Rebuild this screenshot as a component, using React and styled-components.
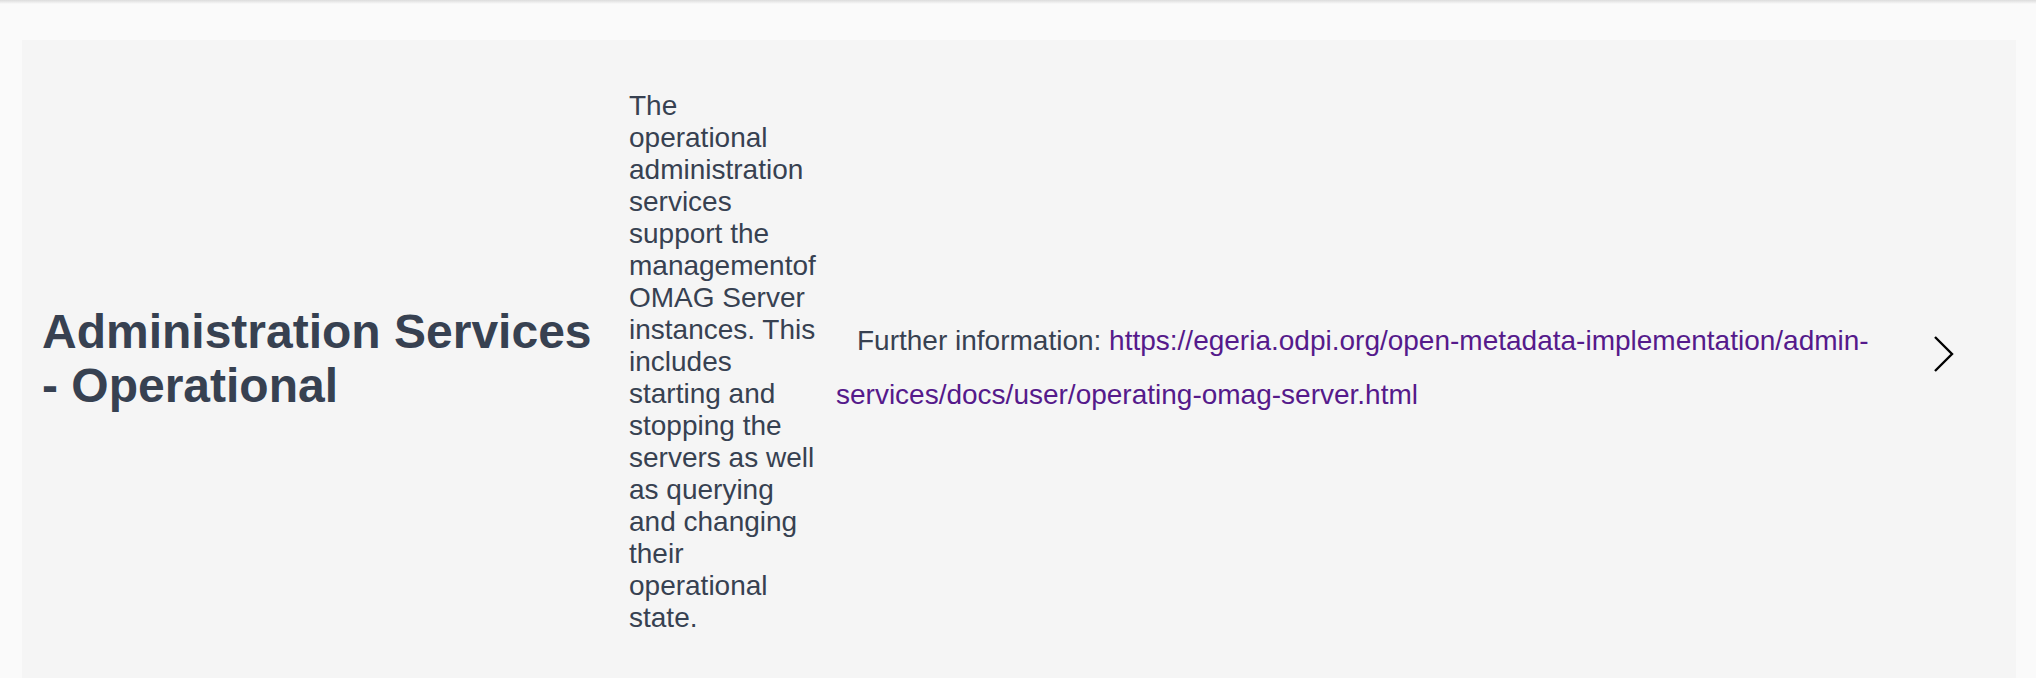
import React from 'react';
import styled, { createGlobalStyle } from 'styled-components';

const GlobalStyle = createGlobalStyle`
  html, body {
    margin: 0;
    padding: 0;
    background: #fafafa;
    font-family: "Liberation Sans", Arial, Helvetica, sans-serif;
  }
`;

const Page = styled.div`
  position: relative;
  padding: 40px 20px 0 22px;
  min-height: 678px;
  box-sizing: border-box;
  overflow: hidden;

  &::before {
    content: '';
    position: absolute;
    top: 0;
    left: 0;
    right: 0;
    height: 4px;
    background: linear-gradient(#dcdcdc, #fafafa);
  }
`;

const Tile = styled.div`
  display: flex;
  align-items: center;
  background: #f5f5f5;
  padding: 50px 0 45px 20px;
  color: #374151;
`;

const Title = styled.h2`
  flex: 0 0 572px;
  margin: 0 0 6px;
  font-size: 48px;
  font-weight: 700;
  line-height: 54px;
`;

const Description = styled.p`
  flex: 0 0 192px;
  margin: 0 0 0 15px;
  font-size: 28px;
  line-height: 32px;
`;

const Info = styled.p`
  flex: 0 0 1040px;
  margin: 12px 0 0 15px;
  font-size: 28px;
  line-height: 54px;
  text-indent: 21px;
`;

const Link = styled.a`
  color: #551a8b;
  text-decoration: none;
`;

const Chevron = styled.svg`
  margin: 0 0 16px 57px;
  flex: 0 0 auto;
`;

export default function App() {
  return (
    <>
      <GlobalStyle />
      <Page>
        <Tile>
          <Title>Administration Services - Operational</Title>
          <Description>
            The operational administration services support the managementof OMAG Server
            instances. This includes starting and stopping the servers as well as querying and
            changing their operational state.
          </Description>
          <Info>
            Further information:{' '}
            <Link href="#">
              https://egeria.odpi.org/open-metadata-implementation/admin-services/docs/user/operating-omag-server.html
            </Link>
          </Info>
          <Chevron width="22" height="38" viewBox="0 0 22 38" fill="none">
            <polyline points="2,2 19,19 2,36" stroke="#000" strokeWidth="2.4" />
          </Chevron>
        </Tile>
      </Page>
    </>
  );
}
